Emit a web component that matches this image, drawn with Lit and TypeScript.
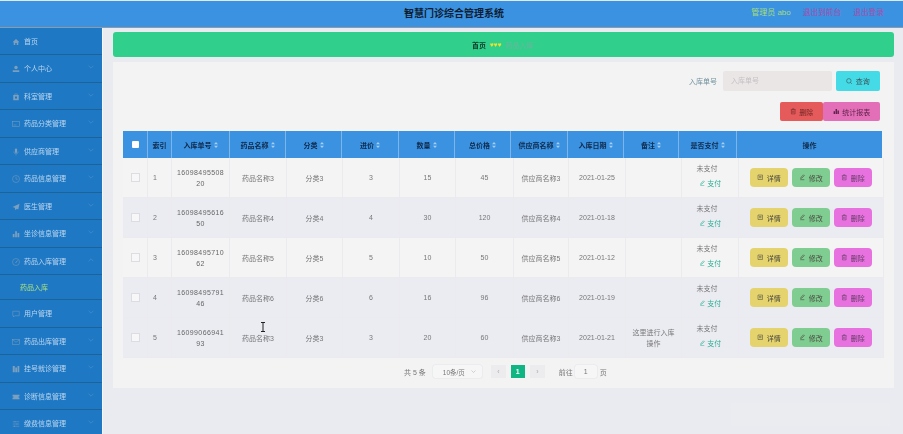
import { LitElement, html, css, svg } from "lit";
import { customElement } from "lit/decorators.js";

const icons: Record<string, unknown> = {
  home: svg`<path d="M8 2 1 8.500h2.500V14h3v-4h3v4h3V8.500H15z" fill="currentColor"/>`,
  user: svg`<circle cx="8" cy="5" r="3.400" fill="currentColor"/><path d="M1.500 10.500h13V14h-13z" fill="currentColor"/>`,
  case: svg`<path d="M2.500 4h11v10.500h-11z" fill="currentColor"/><path d="M5.500 4V1.800h5V4" fill="none" stroke="currentColor"/><rect x="6" y="7" width="4" height="4" fill="#1f78c4"/>`,
  card: svg`<rect x="1" y="3" width="14" height="10" fill="none" stroke="currentColor"/><path d="M3 10h6" stroke="currentColor"/>`,
  mic: svg`<rect x="5.800" y="1" width="4.400" height="9" rx="2.200" fill="currentColor"/><path d="M3.500 7a4.500 4.500 0 0 0 9 0M8 11.500V15" fill="none" stroke="currentColor"/>`,
  clock: svg`<circle cx="8" cy="8" r="7" fill="none" stroke="currentColor"/><path d="M8 3.500v5h3.500" fill="none" stroke="currentColor"/>`,
  send: svg`<path d="M15 1.500 1 8l4.500 1.500L7 14.500l2.500-3 3 1.500z" fill="currentColor"/>`,
  bars: svg`<path d="M1.500 8h3.500v6.500H1.500zM6.300 2.500h3.500v12H6.300zM11 6h3.500v8.500H11z" fill="currentColor"/>`,
  gauge: svg`<circle cx="8" cy="8" r="7" fill="none" stroke="currentColor"/><path d="M7 10l4-5" stroke="currentColor" stroke-width="1.500"/>`,
  chat: svg`<path d="M1.500 2.500h13v9h-9L3 14v-2.500H1.500z" fill="none" stroke="currentColor"/>`,
  mail: svg`<rect x="1" y="3" width="14" height="10" fill="none" stroke="currentColor"/><path d="m1 3.500 7 5 7-5" fill="none" stroke="currentColor"/>`,
  film: svg`<path d="M1.500 2h4v12.500h-4zM6.500 5h3.500v9.500H6.500zM11 2h3.500v12.500H11z" fill="currentColor"/>`,
  ticket: svg`<path d="M1 3.500h14v3l-3 1.500 3 1.500v3H1v-3L4 8 1 6.500z" fill="currentColor"/>`,
  sliders: svg`<path d="M1.500 3.500h13M1.500 8h13M1.500 12.500h13M6 2v3M10 6.500v3M5 11v3" fill="none" stroke="currentColor"/>`,
};

const menu = [
  ["home", "首页", false],
  ["user", "个人中心", true],
  ["case", "科室管理", true],
  ["card", "药品分类管理", true],
  ["mic", "供应商管理", true],
  ["clock", "药品信息管理", true],
  ["send", "医生管理", true],
  ["bars", "坐诊信息管理", true],
  ["gauge", "药品入库管理", true],
  ["sub", "药品入库", false],
  ["chat", "用户管理", true],
  ["mail", "药品出库管理", true],
  ["film", "挂号就诊管理", true],
  ["ticket", "诊断信息管理", true],
  ["sliders", "缴费信息管理", true],
] as const;

const heads = ["", "索引", "入库单号", "药品名称", "分类", "进价", "数量", "总价格", "供应商名称", "入库日期", "备注", "是否支付", "操作"];

const rows = [
  ["1", "1609849550820", "药品名称3", "分类3", "3", "15", "45", "供应商名称3", "2021-01-25", ""],
  ["2", "1609849561650", "药品名称4", "分类4", "4", "30", "120", "供应商名称4", "2021-01-18", ""],
  ["3", "1609849571062", "药品名称5", "分类5", "5", "10", "50", "供应商名称5", "2021-01-12", ""],
  ["4", "1609849579146", "药品名称6", "分类6", "6", "16", "96", "供应商名称6", "2021-01-19", ""],
  ["5", "1609906694193", "药品名称3", "分类3", "3", "20", "60", "供应商名称3", "2021-01-21", "这里进行入库操作"],
];

const ico = (k: string) => html`<svg class="ic" viewBox="0 0 16 16">${icons[k]}</svg>`;
const edit = html`<svg class="bi" viewBox="0 0 16 16"><path d="M3 14h10M4 11l1-3 6-6 2 2-6 6z" fill="none" stroke="currentColor" stroke-width="1.500"/></svg>`;
const doc = html`<svg class="bi" viewBox="0 0 16 16"><path d="M2.500 2.500h11v11h-11zM5 6h6M5 9h6" fill="none" stroke="currentColor" stroke-width="1.300"/></svg>`;
const trash = html`<svg class="bi" viewBox="0 0 16 16"><path d="M2 4h12M6 4V2h4v2M3.500 4.500v10h9v-10M6.500 7v5M9.500 7v5" fill="none" stroke="currentColor" stroke-width="1.300"/></svg>`;

@customElement("app-root")
export class AppRoot extends LitElement {
  static styles = css`
    :host {
      display: block;
      width: 903px;
      height: 434px;
      overflow: hidden;
      position: relative;
      background: #e9ebf1;
      font-family: "Liberation Sans", "Noto Sans CJK SC", sans-serif;
      font-size: 7px;
      color: #666;
    }
    .page { width: 903px; height: 434px; display: flex; flex-direction: column; filter: blur(0.5px); }
    .top {
      flex: none; background: #3a92e0; border-top: 1px solid #dfeaf5; border-bottom: 1px solid #8f9aa6;
      position: relative; display: flex; align-items: center; justify-content: flex-end;
      padding: 0 19px 5px 0; gap: 12px; height: 21px; font-size: 7.700px;
    }
    .title { position: absolute; left: 404px; top: 6px; font-size: 10px; line-height: 14px; font-weight: 700; color: #0e1d33; }
    .admin { color: #a6dc7c; font-size: 8px; }
    .out { color: #a54dad; }
    .body { flex: 1; display: flex; min-height: 0; }
    .side { width: 102px; flex: none; background: #1f78c4; overflow: hidden; border-right: 1px solid #f5f6f8; margin-top: -0.5px; }
    .item {
      height: 27.500px; box-sizing: border-box; padding: 2px 0 0 12px; border-bottom: 1px solid #1b6499; display: flex; align-items: center;
      gap: 4px; color: #bad6ee; position: relative; line-height: 10px;
    }
    .item.sub { height: 25px; padding: 1px 0 0 20px; color: #a6e082; }
    .ic { width: 8px; height: 8px; color: #7d9fbe; flex: none; }
    .chev { position: absolute; left: 87.500px; top: 9px; width: 6px; height: 6px; color: #4d94d0; }
    .main { flex: 1; padding: 4px 9px 0 10px; min-width: 0; }
    .crumb {
      height: 25px; background: #30d08c; border-radius: 3px; display: flex; align-items: center;
      padding-left: 359px; gap: 4px; margin-bottom: 5px;
    }
    .crumb b { font-weight: 700; color: #0d3a28; }
    .crumb .sep { color: #efe02c; font-size: 6.500px; line-height: 7px; }
    .crumb .cur { color: #6cb49e; }
    .panel { height: 326px; background: #f3f3f4; padding: 9px 10px 0; box-sizing: border-box; }
    .search { display: flex; justify-content: flex-end; align-items: center; height: 20px; padding-right: 4px; }
    .search label { color: #71919c; margin-right: 6px; }
    .input {
      width: 109px; height: 20px; background: #ebe6e6; border-radius: 2px; color: #c4c0c4; box-sizing: border-box;
      padding-left: 8px; line-height: 20px;
    }
    .q {
      width: 44px; height: 20px; margin-left: 4px; background: #45dbe6; border-radius: 2px; display: flex; align-items: center;
      justify-content: center; gap: 3px; color: #3a5258;
    }
    .acts { display: flex; justify-content: flex-end; padding-right: 4px; margin-top: 11px; height: 19px; margin-bottom: 10px; }
    .acts div { height: 19px; display: flex; align-items: center; justify-content: center; gap: 3px; border-radius: 2px; }
    .del { width: 43px; background: #e55a5a; color: #6e2626; }
    .st { width: 57px; background: #e46fb9; color: #5e2349; }
    .bi { width: 6.500px; height: 6.500px; flex: none; }
    .thead, .row { display: grid; }
    .thead {
      width: 759px; height: 27px; background: #3a92e0; color: #10294a; text-align: center;
      grid-template-columns: 25px 24px 58px 56px 56px 57px 56px 56px 57px 56px 55px 58px 145px;
    }
    .thead > div { border-right: 1px solid #7db5e8; display: flex; align-items: center; justify-content: center; gap: 2px; font-weight: 700; }
    .thead > div:last-child { border-right: 0; }
    .box { width: 7px; height: 7px; background: #fff; border-radius: 1px; display: block; }
    .row {
      width: 761px; height: 40px; background: #f4f4f5; text-align: center; color: #777;
      grid-template-columns: 25px 24px 58px 57px 56px 57px 56px 58px 55px 57px 56px 57px 145px;
    }
    .row:nth-child(even), .row:last-child { background: #ebecf2; }
    .row > div { border-right: 1px solid #ebebef; border-bottom: 1px solid #ebebef; display: flex; flex-direction: column; align-items: center; justify-content: center; box-sizing: border-box; }
    .row > div:first-child > span { width: 7px; height: 7px; border: 1px solid #dcdde2; background: #f7f7f8; display: block; }
    .row .idx { align-items: flex-start; padding-left: 5px; }
    .num { width: 50px; line-height: 11px; word-break: break-all; letter-spacing: 0.4px; color: #666; }
    .note { width: 46px; line-height: 11px; }
    .pay { gap: 5px; padding-bottom: 4px; }
    .pay span { padding-right: 6px; }
    .pay b { font-weight: 400; color: #2aae94; display: flex; align-items: center; gap: 2px; }
    .ops { flex-direction: row !important; justify-content: flex-start !important; gap: 4px; padding-left: 11px; }
    .ops div { width: 38px; height: 19px; border-radius: 4px; display: flex; align-items: center; justify-content: center; gap: 3px; color: #4a4a40; }
    .ops .d1 { background: #e5d36d; }
    .ops .d2 { background: #80cd92; }
    .ops .d3 { background: #e871e0; color: #603b60; }
    .pager { display: flex; align-items: center; height: 13px; margin-top: 7px; padding-left: 281px; color: #777; }
    .sel { width: 49px; height: 13px; margin-left: 7px; border-radius: 2px; background: #f6f6f7; box-shadow: 0 0 0 .5px #e4e5e8; display: flex; align-items: center; justify-content: space-between; padding: 0 6px 0 10px; box-sizing: border-box; font-size: 6.500px; }
    .sel svg { width: 5px; height: 5px; color: #aaa; }
    .pb { width: 15px; height: 13px; background: #ececee; color: #aaa; display: flex; align-items: center; justify-content: center; }
    .pb.on { background: #10b584; color: #fff; font-weight: 700; width: 14px; margin: 0 5px; }
    .sel + .pb { margin-left: 9px; }
    .go { margin-left: 14px; }
    .gi { width: 22px; height: 13px; margin: 0 3px 0 2px; background: #f6f6f7; box-shadow: 0 0 0 .5px #e4e5e8; display: flex; align-items: center; justify-content: center; border-radius: 2px; }
    .cursor { position: absolute; left: 260px; top: 322px; width: 6px; height: 10px; color: #222; }
    .mark { position: absolute; left: 731px; top: 403px; width: 159px; height: 23px; background: #ebecf0; }
  `;

  render() {
    return html`
      <div class="page">
        <div class="top">
          <div class="title">智慧门诊综合管理系统</div>
          <span class="admin">管理员 abo</span><span class="out">退出到前台</span><span class="out">退出登录</span>
        </div>
        <div class="body">
          <nav class="side">
            ${menu.map(([k, t, ch], i) =>
              k === "sub"
                ? html`<div class="item sub">${t}</div>`
                : html`<div class="item">${ico(k)}<span>${t}</span>
                    ${ch ? html`<svg class="chev" viewBox="0 0 10 10"><path d="${i === 8 ? "M1 7l4-4 4 4" : "M1 3l4 4 4-4"}" fill="none" stroke="currentColor"/></svg>` : ""}</div>`
            )}
          </nav>
          <main class="main">
            <div class="crumb"><b>首页</b><span class="sep">♥♥♥</span><span class="cur">药品入库</span></div>
            <section class="panel">
              <div class="search">
                <label>入库单号</label>
                <div class="input">入库单号</div>
                <div class="q"><svg class="bi" viewBox="0 0 16 16"><circle cx="7" cy="7" r="5.500" fill="none" stroke="currentColor" stroke-width="1.500"/><path d="m11 11 3.500 3.500" stroke="currentColor" stroke-width="1.500"/></svg>查询</div>
              </div>
              <div class="acts">
                <div class="del">${trash}删除</div>
                <div class="st"><svg class="bi" viewBox="0 0 16 16">${icons.bars}</svg>统计报表</div>
              </div>
              <div class="thead">
                ${heads.map((h, i) =>
                  i === 0
                    ? html`<div><span class="box"></span></div>`
                    : html`<div>${h}${i > 1 && i < 12 ? html`<svg width="4" height="6" viewBox="0 0 4 6"><path d="M2 0 4 2.300H0zM2 6 0 3.700h4z" fill="#a8cdf0"/></svg>` : ""}</div>`
                )}
              </div>
              <div class="tbody">
                ${rows.map(
                  (r) => html`<div class="row">
                    <div><span></span></div>
                    <div class="idx">${r[0]}</div>
                    <div><span class="num">${r[1]}</span></div>
                    ${r.slice(2, 9).map((c) => html`<div>${c}</div>`)}
                    <div><span class="note">${r[9]}</span></div>
                    <div class="pay"><span>未支付</span><b>${edit}支付</b></div>
                    <div class="ops">
                      <div class="d1">${doc}详情</div>
                      <div class="d2">${edit}修改</div>
                      <div class="d3">${trash}删除</div>
                    </div>
                  </div>`
                )}
              </div>
              <div class="pager">
                <span>共 5 条</span>
                <div class="sel">10条/页<svg viewBox="0 0 10 10"><path d="M1 3l4 4 4-4" fill="none" stroke="currentColor"/></svg></div>
                <div class="pb">‹</div><div class="pb on">1</div><div class="pb">›</div>
                <span class="go">前往</span><div class="gi">1</div><span>页</span>
              </div>
            </section>
          </main>
        </div>
      </div>
      <svg class="cursor" viewBox="0 0 6 10"><path d="M1 .5h4M1 9.500h4M3 .5v9" fill="none" stroke="currentColor"/></svg>
      <div class="mark"></div>
    `;
  }
}
